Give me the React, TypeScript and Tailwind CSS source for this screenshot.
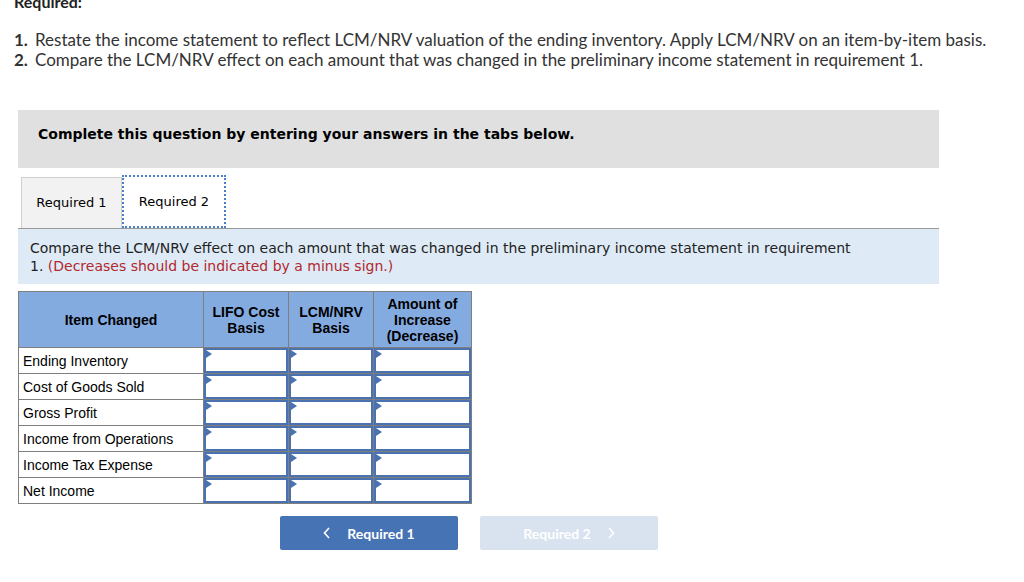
import React from "react";

const rows = [
  "Ending Inventory",
  "Cost of Goods Sold",
  "Gross Profit",
  "Income from Operations",
  "Income Tax Expense",
  "Net Income",
];

function InputCell() {
  return (
    <td className="p-0 border border-[#7f7f7f]">
      <div className="relative h-[25px] border-2 border-[#4a72b1] bg-white">
        <div className="absolute left-0 top-0 w-0 h-0 border-t-[4px] border-b-[4px] border-l-[6px] border-t-transparent border-b-transparent border-l-[#4a72b1]" />
      </div>
    </td>
  );
}

export default function App() {
  return (
    <div className="w-[1024px] h-[582px] bg-white overflow-hidden relative text-[#222]">
      <div className="pl-[14px] -mt-[8px] font-['Lato','Open_Sans',sans-serif] text-[16px] font-bold leading-[20px]">
        Required:
      </div>
      <div className="pl-[14px] mt-[18px] font-['Lato','Open_Sans',sans-serif] text-[17px] leading-[20px] text-[#333]">
        <div className="flex">
          <span className="font-bold w-[21px]">1.</span>
          <span>Restate the income statement to reflect LCM/NRV valuation of the ending inventory. Apply LCM/NRV on an item-by-item basis.</span>
        </div>
        <div className="flex">
          <span className="font-bold w-[21px]">2.</span>
          <span>Compare the LCM/NRV effect on each amount that was changed in the preliminary income statement in requirement 1.</span>
        </div>
      </div>

      <div className="ml-[18px] w-[921px] mt-[40px] h-[58px] bg-[#e0e0e0] pl-[20px] pt-[15px] font-['DejaVu_Sans',sans-serif] font-bold text-[14px] leading-[18px] text-black">
        Complete this question by entering your answers in the tabs below.
      </div>

      <div className="ml-[18px] w-[921px] mt-[7px]">
        <div className="flex items-end h-[53px] pl-[3px]">
          <div className="w-[101px] h-[51px] bg-[#f2f2f2] border border-[#cfcfcf] border-b-0 flex items-center justify-center font-['DejaVu_Sans',sans-serif] text-[13px] text-black">
            Required 1
          </div>
          <div className="w-[104px] h-[53px] bg-white border-2 border-dotted border-[#4a7fcc] flex items-center justify-center font-['DejaVu_Sans',sans-serif] text-[13px] text-black">
            Required 2
          </div>
        </div>
        <div className="bg-[#deebf7] border-t border-[#999] h-[56px] px-[12px] pt-[10px] font-['DejaVu_Sans',sans-serif] text-[14px] leading-[18px] text-[#222]">
          Compare the LCM/NRV effect on each amount that was changed in the preliminary income statement in requirement
          <br />
          1. <span className="text-[#b3272d]">(Decreases should be indicated by a minus sign.)</span>
        </div>
      </div>

      <table className="ml-[18px] mt-[7px] border-collapse font-['Liberation_Sans',Arial,sans-serif] text-[14px] text-black">
        <thead>
          <tr className="h-[56px] bg-[#84abe0]">
            <th className="w-[185px] border border-[#7f7f7f] font-bold text-center leading-[16px]">Item Changed</th>
            <th className="w-[85px] border border-[#7f7f7f] font-bold text-center leading-[16px]">LIFO Cost<br />Basis</th>
            <th className="w-[85px] border border-[#7f7f7f] font-bold text-center leading-[16px]">LCM/NRV<br />Basis</th>
            <th className="w-[98px] border border-[#7f7f7f] font-bold text-center leading-[16px]">Amount of<br />Increase<br />(Decrease)</th>
          </tr>
        </thead>
        <tbody>
          {rows.map((r) => (
            <tr key={r} className="h-[26px]">
              <td className="border border-[#7f7f7f] px-[4px] py-0 text-left leading-[16px]">{r}</td>
              <InputCell />
              <InputCell />
              <InputCell />
            </tr>
          ))}
        </tbody>
      </table>

      <div className="flex gap-[22px] ml-[280px] mt-[12px] font-['Lato','Open_Sans',sans-serif] text-[14px] font-bold">
        <div className="w-[178px] h-[34px] rounded-[2px] bg-[#4673b4] text-white flex items-center justify-center gap-[16px]">
          <svg width="8" height="12" viewBox="0 0 8 12" fill="none" stroke="white" strokeWidth="1.6"><path d="M6 1 L1.5 6 L6 11" /></svg>
          <span>Required 1</span>
        </div>
        <div className="w-[178px] h-[34px] rounded-[2px] bg-[#d9e3f0] text-white flex items-center justify-center gap-[16px]">
          <span>Required 2</span>
          <svg width="8" height="12" viewBox="0 0 8 12" fill="none" stroke="white" strokeWidth="1.6"><path d="M2 1 L6.5 6 L2 11" /></svg>
        </div>
      </div>
    </div>
  );
}
